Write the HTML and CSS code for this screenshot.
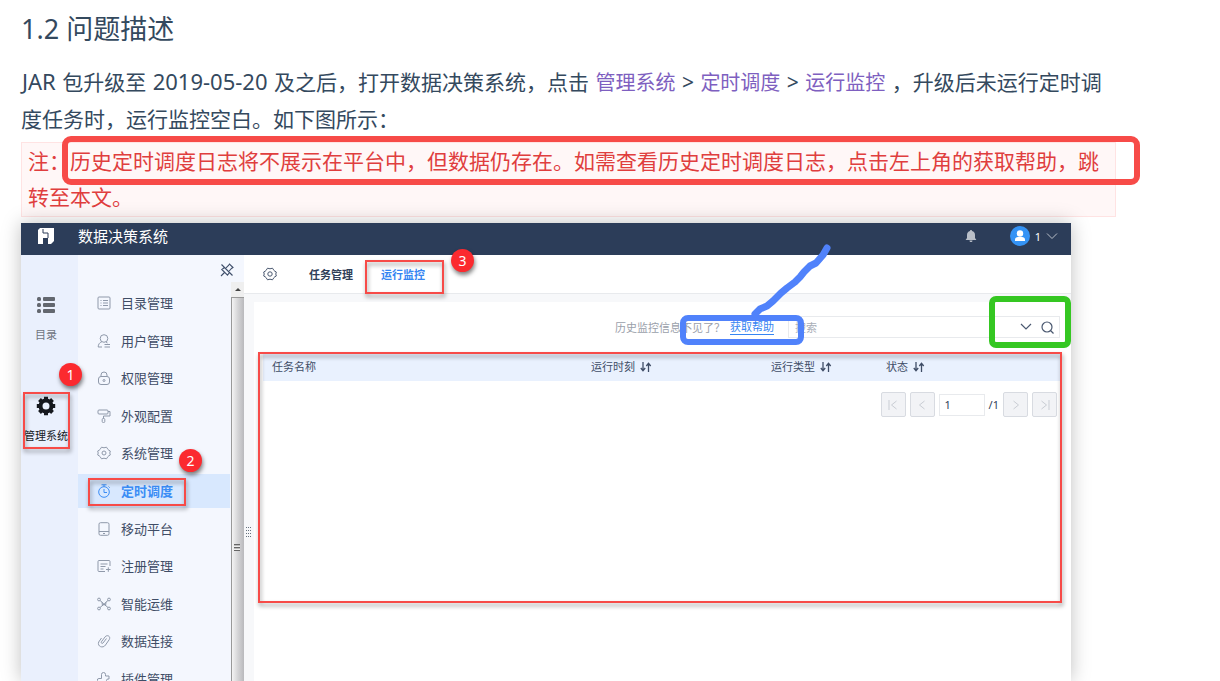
FILE: index.html
```
<!DOCTYPE html>
<html lang="zh-CN">
<head>
  <meta charset="UTF-8">
  <title>问题描述</title>
  <link rel="stylesheet" href="styles.css">
</head>
<body>
  <article class="doc">
    <h2>1.2 问题描述</h2>
    <p class="intro"><span class="latin">JAR</span> 包升级至 <span class="latin">2019-05-20</span> 及之后，打开数据决策系统，点击 <span class="path">管理系统</span> &gt; <span class="path">定时调度</span> &gt; <span class="path">运行监控</span> ，升级后未运行定时调度任务时，运行监控空白。如下图所示：</p>
    <div class="note">
      注：历史定时调度日志将不展示在平台中，但数据仍存在。如需查看历史定时调度日志，点击左上角的获取帮助，跳转至本文。
      <span class="mark mark-note"></span>
    </div>

    <div class="shot">
      <header class="topbar">
        <svg class="logo" width="18" height="18" viewBox="0 0 18 18"><path d="M3 1h14v13l-3 3h-3v-6H6v6H1V3z" fill="#fff"/><path d="M6 2v4h5v5" fill="none" stroke="#2c3d59" stroke-width="1"/></svg>
        <span class="product">数据决策系统</span>
        <button class="icon-btn bell" aria-label="通知"><svg width="12" height="14" viewBox="0 0 12 14"><path d="M6 1c.7 0 1 .4 1 1 2 .5 3 2 3 4v3l1.400 2H.6L2 9V6c0-2 1-3.500 3-4 0-.6.3-1 1-1zM4.500 11.500h3c0 1-.7 1.500-1.500 1.500s-1.500-.5-1.500-1.500z" fill="#b9bfc8"/></svg></button>
        <button class="icon-btn user">
          <svg width="20" height="20" viewBox="0 0 20 20"><circle cx="10" cy="10" r="10" fill="#3493f5"/><circle cx="10" cy="7.500" r="3.200" fill="#fff"/><path d="M5 15v-1.500c0-1.600 1.300-2.500 3-2.500h4c1.700 0 3 .9 3 2.500V15z" fill="#fff"/></svg>
          <span>1</span>
          <svg width="12" height="8" viewBox="0 0 12 8"><path d="M1 1.500l5 5 5-5" fill="none" stroke="#b9bfc8"/></svg>
        </button>
      </header>

      <div class="frame">
        <nav class="rail">
          <a href="#">
            <svg width="18" height="16" viewBox="0 0 18 16" fill="#63676f"><rect width="4" height="4" rx="1.500"/><rect y="6" width="4" height="4" rx="1.500"/><rect y="12" width="4" height="4" rx="1.500"/><rect x="6" width="12" height="4" rx="1"/><rect x="6" y="6" width="12" height="4" rx="1"/><rect x="6" y="12" width="12" height="4" rx="1"/></svg>
            目录
          </a>
          <a href="#" class="current">
            <svg width="20" height="20" viewBox="0 0 20 20"><circle cx="10" cy="10" r="5.500" fill="none" stroke="#16191f" stroke-width="4"/><path d="M10 .8v4M10 15.200v4M.8 10h4M15.200 10h4M3.500 3.500l2.800 2.800M13.700 13.700l2.800 2.800M3.500 16.500l2.800-2.800M13.700 6.300l2.800-2.800" stroke="#16191f" stroke-width="4"/></svg>
            管理系统
          </a>
        </nav>

        <aside class="side">
          <div class="side-head">
            <button class="icon-btn" aria-label="固定"><svg width="14" height="14" viewBox="0 0 14 14" fill="none" stroke="#3f4f6b" stroke-width="1.100"><path d="M1.500 1.500l11 11M4.500 4.500L1.800 6.500l5.700 5.700 2-2.700M4.500 9.500L1 13M6 4.800l2.500-2.300L9.500 1l3.500 3.500-1.500 1L9.200 8"/></svg></button>
          </div>
          <div class="side-body">
            <ul class="menu">
              <li><a href="#"><svg viewBox="0 0 14 14"><rect x="1" y="1" width="12" height="12" rx="1"/><path d="M3.500 4.500h1M6 4.500h5M3.500 7h1M6 7h5M3.500 9.500h1M6 9.500h5"/></svg>目录管理</a></li>
              <li><a href="#"><svg viewBox="0 0 14 14"><circle cx="7" cy="4.500" r="3.800"/><path d="M4.800 7.800C2.500 8.500 1.200 10.500 1.200 13H5M9 8l1.500 1M7.500 10.500H13M7.500 13H13"/></svg>用户管理</a></li>
              <li><a href="#"><svg viewBox="0 0 14 14"><rect x="1.500" y="5.500" width="11" height="8" rx="2.500"/><path d="M4 5.500V4a3 3 0 0 1 6 0v1.500"/><circle cx="7" cy="9.500" r="1"/></svg>权限管理</a></li>
              <li><a href="#"><svg viewBox="0 0 14 14"><rect x="1" y="1" width="10" height="4" rx="1"/><path d="M11 2.500h2v4.500H6.500v2.500"/><rect x="5.200" y="9.500" width="2.600" height="4" rx="1"/></svg>外观配置</a></li>
              <li><a href="#"><svg viewBox="0 0 14 14"><path d="M4.500 1.200Q7 2.400 9.500 1.200L11 3.500Q11.300 4 13.300 5Q12.300 7 13.300 9Q11.300 10 11 10.500L9.500 12.800Q7 11.600 4.500 12.800L3 10.500Q2.700 10 .7 9Q1.700 7 .7 5Q2.700 4 3 3.500z"/><circle cx="7" cy="7" r="2"/></svg>系统管理</a></li>
              <li class="active"><a href="#"><svg viewBox="0 0 14 14"><circle cx="7" cy="8" r="5.300"/><path d="M4.500 .8h5M7 .8v2M7 5v3.500h3M11.500 2.500l1.200 1.200"/></svg>定时调度</a></li>
              <li><a href="#"><svg viewBox="0 0 14 14"><rect x="2" y=".7" width="10" height="12.600" rx="1.500"/><path d="M2 9.500h10M6 11.500h2"/></svg>移动平台</a></li>
              <li><a href="#"><svg viewBox="0 0 14 14"><path d="M13 7V2.500a1 1 0 0 0-1-1H2a1 1 0 0 0-1 1v9a1 1 0 0 0 1 1h6M3.500 5h7M3.500 7.500h5M3.500 10h3M9 10.500h4.500M11.300 8.300v4.500"/></svg>注册管理</a></li>
              <li><a href="#"><svg viewBox="0 0 14 14"><circle cx="2" cy="2.500" r="1.400"/><circle cx="12" cy="2.500" r="1.400"/><circle cx="2" cy="11.500" r="1.400"/><circle cx="12" cy="11.500" r="1.400"/><path d="M3 3.500l2.500 2L7 8l1.500-2.500L11 3.500M3 10.500L6 8M11 10.500L8 8M5 5l.5 4L7 6.500 8.500 9 9 5"/></svg>智能运维</a></li>
              <li><a href="#"><svg viewBox="0 0 14 14"><path d="M9.500 4.500L6 9c-.8 1-2.300 0-1.600-1.200L8 3c2-2.800 6-.8 4.300 2.500L8.500 11c-2.500 3.800-8.500 1.500-6.800-3L4.500 4"/></svg>数据连接</a></li>
              <li><a href="#"><svg viewBox="0 0 14 14"><path d="M4.500 4V2.500a2 2 0 0 1 4 0V4H12v3h-1a1.500 1.500 0 0 0 0 3h1v3H3v-3H2a1.700 1.700 0 0 1 0-3.500h2.500z"/></svg>插件管理</a></li>
            </ul>
            <div class="scrollbar">
              <span class="scroll-up"></span>
              <div class="thumb"><span class="grip"></span></div>
            </div>
          </div>
        </aside>

        <main class="main">
          <nav class="tabs">
            <button class="icon-btn" aria-label="设置"><svg width="14" height="14" viewBox="0 0 14 14" fill="none" stroke="#4a5870"><path d="M4.500 1.200Q7 2.400 9.500 1.200L11 3.500Q11.300 4 13.300 5Q12.300 7 13.300 9Q11.300 10 11 10.500L9.500 12.800Q7 11.600 4.500 12.800L3 10.500Q2.700 10 .7 9Q1.700 7 .7 5Q2.700 4 3 3.500z"/><circle cx="7" cy="7" r="2.200"/></svg></button>
            <a href="#">任务管理</a>
            <a href="#" class="current">运行监控</a>
          </nav>
          <div class="work">
            <div class="splitter"><span></span></div>
            <section class="panel">
              <form class="search">
                <span class="hint">历史监控信息不见了？</span>
                <a href="#">获取帮助</a>
                <div class="search-box">
                  <input type="text" placeholder="搜索" aria-label="搜索">
                  <button type="button" class="icon-btn" aria-label="展开"><svg width="12" height="8" viewBox="0 0 12 8"><path d="M1 1l5 5 5-5" fill="none" stroke="#4a5870" stroke-width="1.200"/></svg></button>
                  <button type="button" class="icon-btn" aria-label="查找"><svg width="13" height="13" viewBox="0 0 13 13"><circle cx="6" cy="6" r="5" fill="none" stroke="#4a5870" stroke-width="1.200"/><path d="M9.500 9.500l3 3" stroke="#4a5870" stroke-width="1.200"/></svg></button>
                </div>
              </form>
              <table>
                <colgroup><col><col class="col-time"><col class="col-type"><col class="col-state"></colgroup>
                <thead>
                  <tr>
                    <th>任务名称</th>
                    <th>运行时刻 <svg class="sort" viewBox="0 0 12 10"><path d="M3 0v8M.8 6L3 8.800 5.200 6M8.500 10V2M6.300 4l2.200-2.800L10.700 4"/></svg></th>
                    <th>运行类型 <svg class="sort" viewBox="0 0 12 10"><path d="M3 0v8M.8 6L3 8.800 5.200 6M8.500 10V2M6.300 4l2.200-2.800L10.700 4"/></svg></th>
                    <th>状态 <svg class="sort" viewBox="0 0 12 10"><path d="M3 0v8M.8 6L3 8.800 5.200 6M8.500 10V2M6.300 4l2.200-2.800L10.700 4"/></svg></th>
                  </tr>
                </thead>
              </table>
              <div class="pager">
                <button disabled aria-label="首页"><svg viewBox="0 0 10 10"><path d="M1 0v10M8.500 1l-5 4 5 4"/></svg></button>
                <button disabled aria-label="上一页"><svg viewBox="0 0 10 10"><path d="M7.500 1l-5 4 5 4"/></svg></button>
                <input type="text" value="1" aria-label="页码">
                <span>/1</span>
                <button disabled aria-label="下一页"><svg viewBox="0 0 10 10"><path d="M2.500 1l5 4-5 4"/></svg></button>
                <button disabled aria-label="末页"><svg viewBox="0 0 10 10"><path d="M9 0v10M1.500 1l5 4-5 4"/></svg></button>
              </div>
            </section>
          </div>
        </main>
      </div>

      <!-- 标注 -->
      <span class="mark mark-system"></span>
      <span class="mark mark-schedule"></span>
      <span class="mark mark-monitor"></span>
      <span class="mark mark-table"></span>
      <span class="mark mark-search"></span>
      <span class="mark mark-help"></span>
      <svg class="pen" width="84" height="76" viewBox="0 0 84 76"><path d="M78 6L74 13L67 21L61 24L55 30L51 35L46 40L38 46L32 51L24 59L18 64L11 67L6 72" fill="none" stroke="#5082fb" stroke-width="7" stroke-linecap="round" stroke-linejoin="round"/></svg>
      <span class="badge badge-1">1</span>
      <span class="badge badge-2">2</span>
      <span class="badge badge-3">3</span>
    </div>
  </article>
</body>
</html>
```
FILE: styles.css
```
* {
  box-sizing: border-box;
}
body {
  margin: 0;
  height: 100vh;
  overflow: hidden;
  background: #fff;
  color: #34495e;
  font-family: "Noto Sans", "Noto Sans CJK SC", sans-serif;
}
a {
  color: inherit;
  text-decoration: none;
}
.doc {
  height: 100vh;
  padding: 9px 104px 0 21px;
  display: flex;
  flex-direction: column;
}
h2 {
  margin: 0 0 14px;
  font-size: 27px;
  font-weight: 400;
  line-height: 40px;
}
.intro {
  margin: 0;
  font-size: 21px;
  line-height: 36px;
}
.latin {
  padding: 0 1px;
  font-size: 22px;
}
.path {
  padding: 0 1px;
  font-size: 20px;
  color: #7e5fc0;
}
.note {
  position: relative;
  margin-top: 5px;
  padding: 0 6px 1px;
  border: 1px solid #ffe3e3;
  background: #fff7f7;
  color: #e03e3e;
  font-size: 21px;
  line-height: 36px;
}

/* 截图窗口 */
.shot {
  position: relative;
  flex: 1;
  min-height: 0;
  margin: 6px 45px 0 0;
  display: flex;
  flex-direction: column;
  box-shadow: 0 0 18px rgba(0, 0, 0, 0.25);
  background: #fff;
  font-size: 11px;
}
.icon-btn {
  display: flex;
  align-items: center;
  padding: 0;
  border: 0;
  background: none;
  color: inherit;
  font: inherit;
}
.topbar {
  flex: none;
  display: flex;
  align-items: center;
  height: 32px;
  padding: 0 13px 6px 16px;
  background: #2c3d59;
  color: #fff;
}
.product {
  margin-left: 23px;
  font-size: 15px;
  line-height: 26px;
}
.bell {
  margin-left: auto;
}
.user {
  gap: 5px;
  margin-left: 33px;
}
.frame {
  flex: 1;
  min-height: 0;
  display: flex;
  overflow: hidden;
}
.rail {
  flex: none;
  width: 57px;
  padding-top: 42px;
  background: #eaf0fd;
}
.rail a {
  display: flex;
  flex-direction: column;
  align-items: center;
  gap: 12px;
  height: 99px;
  padding-right: 7px;
  color: #6f747d;
  line-height: 20px;
  white-space: nowrap;
}
.rail .current {
  gap: 10px;
  color: #16191f;
}
.side {
  flex: none;
  width: 166px;
  display: flex;
  flex-direction: column;
  background: #f4f7fe;
}
.side-head {
  flex: none;
  display: flex;
  justify-content: flex-end;
  height: 27px;
  padding: 3px 10px 0 0;
}
.side-body {
  flex: 1;
  min-height: 0;
  display: flex;
}
.menu {
  flex: 1;
  display: flex;
  flex-direction: column;
  justify-content: space-between;
  height: 410px;
  margin: 4px 1px 0 0;
  padding: 0;
  list-style: none;
}
.menu a {
  display: flex;
  align-items: center;
  gap: 10px;
  height: 34px;
  padding-left: 19px;
  color: #3f4d66;
  font-size: 13px;
  line-height: 18px;
}
.menu svg {
  width: 14px;
  height: 14px;
  fill: none;
  stroke: #8f99aa;
}
.menu .active a {
  background: #d8e8fe;
  color: #3b8df5;
  font-weight: 700;
}
.menu .active svg {
  stroke: #3b8df5;
}
.scrollbar {
  width: 13px;
  display: flex;
  flex-direction: column;
}
.scroll-up {
  flex: none;
  display: flex;
  align-items: center;
  justify-content: center;
  height: 15px;
  background: #efefef;
}
.scroll-up::before {
  content: "";
  border: 3px solid transparent;
  border-top: 0;
  border-bottom-color: #444;
}
.thumb {
  flex: 1;
  padding: 246px 0 0 2px;
  border-top: 1px solid #999;
  border-left: 1px solid #999;
  background: linear-gradient(to right, #f4f4f4, #d4d4d6 50%, #b9b9bc);
}
.grip {
  display: block;
  width: 6px;
  height: 7px;
  background: repeating-linear-gradient(#666 0 1px, #bbb 1px 2px, #eee 2px 3px);
}
.main {
  flex: 1;
  min-width: 0;
  display: flex;
  flex-direction: column;
}
.tabs {
  flex: none;
  display: flex;
  align-items: center;
  height: 39px;
  padding-left: 19px;
  border-bottom: 1px solid #e8eaed;
  color: #2f3e58;
  font-weight: 700;
}
.tabs a {
  margin-left: 32px;
}
.tabs a + a {
  margin-left: 28px;
}
.tabs .current {
  color: #3685f2;
}
.work {
  flex: 1;
  display: flex;
  padding-top: 8px;
  background: #f7f8fa;
}
.splitter {
  flex: none;
  width: 10px;
  padding: 225px 0 0 2px;
}
.splitter span {
  display: block;
  width: 5px;
  height: 12px;
  background:
    repeating-linear-gradient(to right, transparent 0 1px, #f7f8fa 1px 2px),
    repeating-linear-gradient(#66727f 0 1px, #f7f8fa 1px 3px);
}
.panel {
  flex: 1;
  min-width: 0;
  padding: 14px 11px 0 9px;
  background: #fff;
}
.search {
  display: flex;
  align-items: center;
  justify-content: flex-end;
  height: 22px;
}
.hint {
  color: #9aa0aa;
}
.search a {
  margin: 0 14px 0 5px;
  border-bottom: 1px solid #3685f2;
  color: #3685f2;
  line-height: 14px;
}
.search-box {
  display: flex;
  align-items: center;
  gap: 9px;
  width: 272px;
  height: 22px;
  padding: 0 5px 0 6px;
  border: 1px solid #e8eaed;
}
input {
  min-width: 0;
  padding: 0;
  border: 0;
  outline: 0;
  color: #2f3e58;
  font: inherit;
}
.search-box input {
  flex: 1;
}
input::placeholder {
  color: #a9aeb7;
}
table {
  width: 100%;
  margin-top: 15px;
  border-collapse: collapse;
  table-layout: fixed;
}
.col-time {
  width: 180px;
}
.col-type {
  width: 115px;
}
.col-state {
  width: 183px;
}
th {
  height: 28px;
  padding: 0 0 2px 9px;
  background: #e9f1fe;
  color: #3f4d66;
  font-weight: 400;
  text-align: left;
}
.sort {
  width: 12px;
  height: 10px;
  margin-left: 2px;
  vertical-align: -1px;
  fill: none;
  stroke: #3f4d66;
  stroke-width: 1.3;
}
.pager {
  display: flex;
  align-items: center;
  justify-content: flex-end;
  gap: 4px;
  padding: 11px 3px 0 0;
  color: #2f3e58;
}
.pager button {
  display: flex;
  align-items: center;
  justify-content: center;
  width: 25px;
  height: 25px;
  padding: 0;
  border: 1px solid #d8dbe1;
  border-radius: 2px;
  background: #f2f3f6;
}
.pager svg {
  width: 10px;
  height: 10px;
  fill: none;
  stroke: #c9cdd4;
}
.pager input {
  width: 46px;
  height: 22px;
  padding-left: 5px;
  border: 1px solid #e8eaed;
}

/* 标注框 */
.mark {
  position: absolute;
  border: 2px solid #f74b48;
  filter: drop-shadow(1px 3px 2px rgba(0, 0, 0, 0.4));
  pointer-events: none;
}
.mark-note {
  top: -7px;
  left: 40px;
  right: -25px;
  height: 49px;
  border-width: 6px;
  border-radius: 9px;
  filter: none;
}
.mark-system {
  top: 169px;
  left: 2px;
  width: 47px;
  height: 57px;
}
.mark-schedule {
  top: 255px;
  left: 67px;
  width: 98px;
  height: 28px;
}
.mark-monitor {
  top: 37px;
  left: 344px;
  width: 79px;
  height: 34px;
}
.mark-table {
  top: 129px;
  left: 237px;
  right: 9px;
  height: 251px;
}
.mark-search {
  top: 73px;
  right: 0;
  width: 82px;
  height: 52px;
  border: 6px solid #35c722;
  border-radius: 7px;
  filter: none;
}
.mark-help {
  top: 92px;
  right: 267px;
  width: 124px;
  height: 30px;
  border: 6px solid #5082fb;
  border-radius: 8px;
  filter: none;
}
.pen {
  position: absolute;
  top: 19px;
  right: 238px;
}
.badge {
  position: absolute;
  width: 23px;
  height: 23px;
  border-radius: 50%;
  background: #fb2a2f;
  box-shadow: 1px 3px 4px rgba(0, 0, 0, 0.5);
  color: #fff;
  font-size: 14px;
  line-height: 23px;
  text-align: center;
}
.badge-1 {
  top: 140px;
  left: 38px;
}
.badge-2 {
  top: 226px;
  left: 158px;
}
.badge-3 {
  top: 26px;
  left: 430px;
}
```
